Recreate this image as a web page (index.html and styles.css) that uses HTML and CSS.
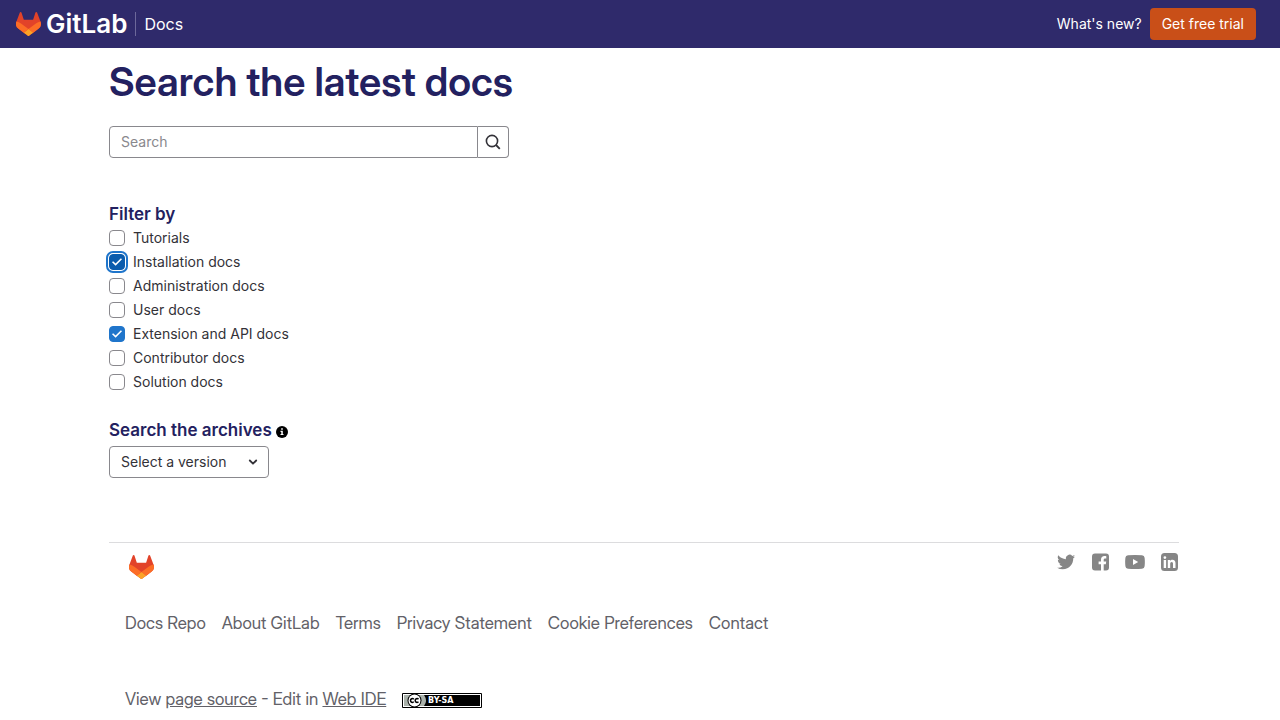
FILE: index.html
```html
<!DOCTYPE html>
<html lang="en">
<head>
<meta charset="utf-8">
<meta name="viewport" content="width=device-width, initial-scale=1">
<title>Search the latest docs | GitLab Docs</title>
<link rel="stylesheet" href="styles.css">
</head>
<body>
<svg class="sprite" aria-hidden="true">
  <symbol id="tanuki" viewBox="0 0 25 24">
    <path fill="#E24329" d="m24.507 9.5-.034-.09L21.082.562a.896.896 0 0 0-1.694.091l-2.29 7.01H7.825L5.535.653a.898.898 0 0 0-1.694-.09L.451 9.411.416 9.5a6.297 6.297 0 0 0 2.09 7.278l.012.01.03.022 5.16 3.867 2.56 1.935 1.554 1.176a1.051 1.051 0 0 0 1.268 0l1.555-1.176 2.56-1.935 5.197-3.89.014-.01A6.297 6.297 0 0 0 24.507 9.5Z"/>
    <path fill="#FC6D26" d="m24.507 9.5-.034-.09a11.44 11.44 0 0 0-4.56 2.051l-7.447 5.632 4.742 3.584 5.197-3.89.014-.01A6.297 6.297 0 0 0 24.507 9.5Z"/>
    <path fill="#FCA326" d="m7.707 20.677 2.56 1.935 1.555 1.176a1.051 1.051 0 0 0 1.268 0l1.555-1.176 2.56-1.935-4.743-3.584-4.755 3.584Z"/>
    <path fill="#FC6D26" d="M5.01 11.461a11.43 11.43 0 0 0-4.56-2.05L.416 9.5a6.297 6.297 0 0 0 2.09 7.278l.012.01.03.022 5.16 3.867 4.745-3.584-7.444-5.632Z"/>
  </symbol>
</svg>

<header class="navbar">
  <a class="brand" href="#" aria-label="GitLab Docs">
    <svg class="tanuki" aria-hidden="true"><use href="#tanuki"/></svg>
    <span class="wordmark">GitLab</span>
    <span class="product">Docs</span>
  </a>
  <nav class="nav-actions">
    <a class="nav-link" href="#">What's new?</a>
    <a class="trial" href="#">Get free trial</a>
  </nav>
</header>

<div class="page">
  <main>
    <h1 class="title">Search the latest docs</h1>
    <form class="search" role="search">
      <input class="search-input" type="text" placeholder="Search" aria-label="Search">
      <button class="search-button" type="button" aria-label="Search">
        <svg class="icon" viewBox="0 0 16 16" fill="none" stroke="currentColor" aria-hidden="true">
          <circle cx="7" cy="7" r="5.6" stroke-width="1.6"/>
          <path d="m11 11 3.800 3.800" stroke-width="1.800"/>
        </svg>
      </button>
    </form>

    <fieldset class="filters">
      <legend class="section-title">Filter by</legend>
      <label class="option"><input class="check" type="checkbox">Tutorials</label>
      <label class="option"><input class="check check-active" type="checkbox" checked>Installation docs</label>
      <label class="option"><input class="check" type="checkbox">Administration docs</label>
      <label class="option"><input class="check" type="checkbox">User docs</label>
      <label class="option"><input class="check" type="checkbox" checked>Extension and API docs</label>
      <label class="option"><input class="check" type="checkbox">Contributor docs</label>
      <label class="option"><input class="check" type="checkbox">Solution docs</label>
    </fieldset>

    <section class="archives">
      <div class="archives-head">
        <label class="section-title" for="version">Search the archives</label>
        <svg class="info" viewBox="0 0 12 12" aria-hidden="true">
          <circle cx="6" cy="6" r="6"/>
          <path fill="#fff" d="M5.2 2.3h1.6v1.5H5.2zM4.5 4.8h2.3v3.2h.7v1.1h-3V8h.8V5.9h-.8z"/>
        </svg>
      </div>
      <div class="select-wrap">
        <select class="select" id="version"><option>Select a version</option></select>
        <svg class="chevron" viewBox="0 0 16 16" fill="none" stroke="currentColor" stroke-width="1.8" stroke-linecap="round" stroke-linejoin="round" aria-hidden="true"><path d="m4.800 6.500 3.200 3.200 3.200-3.200"/></svg>
      </div>
    </section>
  </main>

  <footer class="footer">
    <div class="footer-top">
      <a class="footer-logo" href="#" aria-label="GitLab"><svg class="tanuki" aria-hidden="true"><use href="#tanuki"/></svg></a>
      <div class="social">
        <a href="#" aria-label="Twitter"><svg width="19" height="18" viewBox="0 0 25 24"><path d="M24 4.6a10 10 0 0 1-2.8.8 5 5 0 0 0 2.1-2.7 10 10 0 0 1-3.1 1.2 4.9 4.9 0 0 0-8.4 4.5A14 14 0 0 1 1.700 3.100a4.900 4.900 0 0 0 1.500 6.600 4.900 4.900 0 0 1-2.200-.6v.1a4.900 4.900 0 0 0 3.900 4.800 5 5 0 0 1-2.200.1 4.900 4.900 0 0 0 4.600 3.400A9.900 9.900 0 0 1 0 19.500a14 14 0 0 0 7.500 2.200c9.100 0 14-7.500 14-14v-.6A10 10 0 0 0 24 4.600z"/></svg></a>
        <a href="#" aria-label="Facebook"><svg width="17" height="18" viewBox="0 0 17 18"><path d="M3 .5h11a3 3 0 0 1 3 3v11a3 3 0 0 1-3 3h-2.300v-6.300h2.100l.4-2.700h-2.500V6.900c0-.8.400-1.400 1.500-1.400h1.100V3.200c-.3 0-1-.2-1.900-.2C10.400 3 9 4.200 9 6.500v2H6.600v2.700H9v6.300H3a3 3 0 0 1-3-3v-11a3 3 0 0 1 3-3z"/></svg></a>
        <a href="#" aria-label="YouTube"><svg width="20" height="18" viewBox="0 0 20 18"><path fill-rule="evenodd" d="M3 2.200q7-.6 14 0a2.700 2.700 0 0 1 2.600 2.500q.5 4.300 0 8.600a2.700 2.700 0 0 1-2.600 2.500q-7 .6-14 0A2.700 2.700 0 0 1 .4 13.300q-.5-4.300 0-8.600A2.700 2.700 0 0 1 3 2.200zM8 6v6l5.200-3z"/></svg></a>
        <a href="#" aria-label="LinkedIn"><svg width="17" height="18" viewBox="0 0 17 18"><path fill-rule="evenodd" d="M3.500 0h10A3.500 3.500 0 0 1 17 3.500v11a3.500 3.500 0 0 1-3.500 3.500h-10A3.500 3.500 0 0 1 0 14.500v-11A3.500 3.500 0 0 1 3.500 0zM2.700 7v8h2.400V7zM3.900 3.200a1.400 1.400 0 1 0 0 2.800 1.400 1.400 0 0 0 0-2.800zM6.800 7v8h2.400v-4.200c0-1.200.5-1.900 1.500-1.900.9 0 1.300.7 1.300 1.900V15h2.500v-4.800C14.500 8 13.400 6.800 11.500 6.800c-1.100 0-1.900.5-2.300 1.200V7z"/></svg></a>
      </div>
    </div>
    <nav class="footer-links">
      <a href="#">Docs Repo</a>
      <a href="#">About GitLab</a>
      <a href="#">Terms</a>
      <a href="#">Privacy Statement</a>
      <a href="#">Cookie Preferences</a>
      <a href="#">Contact</a>
    </nav>
    <div class="footer-source">
      <span>View <a href="#">page source</a> - Edit in <a href="#">Web IDE</a></span>
      <a class="license" href="#" aria-label="Creative Commons BY-SA license">
        <svg width="80" height="15" viewBox="0 0 80 15" aria-hidden="true">
          <rect width="80" height="15" rx="1"/>
          <rect x="1" y="1" width="78" height="13" fill="#fff"/>
          <rect x="2" y="2" width="76" height="11"/>
          <path fill="#aab2ab" d="M2 2h20q4 5.500 0 11H2z"/>
          <circle cx="12.500" cy="7.500" r="7"/>
          <circle cx="12.500" cy="7.500" r="6" fill="#fff"/>
          <path fill="none" stroke="#000" stroke-width="1.500" d="M11.800 6.200a1.900 1.900 0 1 0 0 2.600M16.500 6.200a1.900 1.900 0 1 0 0 2.600"/>
          <text class="license-text" x="26" y="10">BY-SA</text>
        </svg>
      </a>
    </div>
  </footer>
</div>
</body>
</html>
```
FILE: styles.css
```css
* { box-sizing: border-box; }

body {
  margin: 0;
  background: #fff;
  color: #333238;
  font: 14px/24px Inter, "Noto Sans", sans-serif;
}

a { color: inherit; text-decoration: none; }
svg { display: block; }
.sprite { position: absolute; width: 0; height: 0; }

.navbar {
  display: flex;
  align-items: center;
  justify-content: space-between;
  height: 48px;
  padding: 0 24px 0 16px;
  background: #2f2a6b;
  color: #fff;
}
.brand { display: flex; align-items: center; }
.tanuki { width: 25px; height: 24px; }
.wordmark {
  margin-left: 5px;
  font-size: 26px;
  font-weight: 600;
}
.product {
  margin-left: 8px;
  padding-left: 8px;
  border-left: 1px solid #6c689a;
  font-size: 16px;
}
.nav-actions { display: flex; align-items: center; gap: 8px; }
.trial {
  padding: 4px 12px;
  border-radius: 4px;
  background: #c94f18;
}

.page {
  max-width: 1094px;
  margin: 0 auto;
  padding: 0 8px 0 16px;
}
.title {
  margin: 0;
  padding: 10px 0 20px;
  color: #232160;
  font-family: "Inter Display", Inter, "Noto Sans", sans-serif;
  font-size: 40px;
  font-weight: 600;
  line-height: 48px;
}

.search { display: flex; max-width: 400px; height: 32px; }
.search-input {
  flex: 1;
  min-width: 0;
  padding: 0 11px;
  border: 1px solid #89888d;
  border-radius: 4px 0 0 4px;
  font: inherit;
}
.search-input::placeholder { color: #89888d; }
.search-button {
  display: grid;
  place-items: center;
  width: 31px;
  padding: 0;
  border: 1px solid #89888d;
  border-left: 0;
  border-radius: 0 4px 4px 0;
  background: #fff;
  color: #333238;
}
.icon { width: 16px; height: 16px; }

.filters { margin: 44px 0 0; padding: 0; border: 0; }
.section-title {
  padding: 0;
  color: #232160;
  font-size: 17px;
  font-weight: 600;
}
.option { display: flex; align-items: center; gap: 8px; width: fit-content; }
.check {
  appearance: none;
  width: 16px;
  height: 16px;
  margin: 0;
  border: 1px solid #89888d;
  border-radius: 4px;
  background: #fff;
}
.check:checked {
  display: grid;
  place-items: center;
  border-color: #1f75cb;
  background: #1f75cb;
}
.check:checked::before {
  content: "";
  width: 10px;
  height: 8px;
  background: #fff;
  clip-path: polygon(0 54%, 11% 40%, 36% 70%, 89% 2%, 100% 16%, 36% 98%);
}
.check-active:checked {
  border-color: #0b5cad;
  background: #0b5cad;
  box-shadow: 0 0 0 1px #fff, 0 0 0 3px #1f75cb;
}

.archives { margin-top: 24px; }
.archives-head { display: flex; align-items: center; gap: 4px; }
.info { width: 12px; height: 12px; margin-top: 4px; }
.select-wrap { display: grid; align-items: center; width: 160px; margin-top: 4px; }
.select, .chevron { grid-area: 1 / 1; }
.select {
  appearance: none;
  height: 32px;
  padding: 0 11px;
  border: 1px solid #89888d;
  border-radius: 4px;
  background: #fff;
  color: #333238;
  font: inherit;
}
.chevron {
  justify-self: end;
  width: 16px;
  height: 16px;
  margin-right: 8px;
  pointer-events: none;
}

.footer {
  margin-top: 64px;
  border-top: 1px solid #dcdcde;
  color: #626168;
  font-family: "Inter Display", Inter, "Noto Sans", sans-serif;
  font-size: 17px;
}
.footer-top { display: flex; justify-content: space-between; align-items: flex-start; }
.footer-logo { padding: 12px 0 0 20px; }
.social {
  display: flex;
  align-items: center;
  gap: 16px;
  padding: 10px 1px 0 0;
  fill: #868686;
}
.footer-links { display: flex; flex-wrap: wrap; gap: 0 16px; padding: 32px 16px 0; }
.footer-source {
  display: flex;
  align-items: center;
  gap: 16px;
  padding: 52px 16px 8px;
}
.footer-source span a { text-decoration: underline; }
.license { padding-top: 2px; }
.license-text { fill: #fff; font: bold 8px "DejaVu Sans", sans-serif; }
```
